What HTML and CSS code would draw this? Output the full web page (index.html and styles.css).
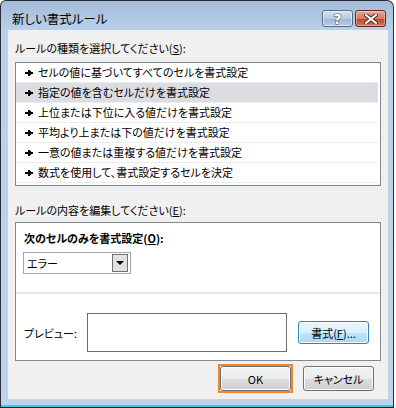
FILE: index.html
```html
<!DOCTYPE html>
<html lang="ja">
<head>
    <meta charset="UTF-8">
    <title>新しい書式ルール</title>
    <link rel="stylesheet" href="styles.css">
</head>
<body>
<div class="window">
    <div class="titlebar">
        <span class="title">新しい書式ルール</span>
        <div class="caption-buttons">
            <button class="cap help"><span>?</span></button>
            <button class="cap close">
                <svg width="14" height="10" viewBox="0 0 14 10">
                    <path d="M2 1 L12 9 M12 1 L2 9" stroke="#4a2a26" stroke-width="4" stroke-linecap="square"/>
                    <path d="M2 1 L12 9 M12 1 L2 9" stroke="#fff" stroke-width="2" stroke-linecap="square"/>
                </svg>
            </button>
        </div>
    </div>

    <div class="client">
        <div class="label">ルールの種類を選択してください(<u>S</u>):</div>
        <ul class="rule-list">
            <li><i class="arrow"></i>セルの値に基づいてすべてのセルを書式設定</li>
            <li class="selected"><i class="arrow"></i>指定の値を含むセルだけを書式設定</li>
            <li><i class="arrow"></i>上位または下位に入る値だけを書式設定</li>
            <li><i class="arrow"></i>平均より上または下の値だけを書式設定</li>
            <li><i class="arrow"></i>一意の値または重複する値だけを書式設定</li>
            <li><i class="arrow"></i>数式を使用して、書式設定するセルを決定</li>
        </ul>

        <div class="label label-edit">ルールの内容を編集してください(<u>E</u>):</div>
        <div class="edit-box">
            <div class="edit-top">
                <div class="bold-label">次のセルのみを書式設定(<u>O</u>):</div>
                <div class="combo">
                    <span>エラー</span>
                    <span class="combo-btn"></span>
                </div>
            </div>
            <div class="edit-bottom">
                <span class="preview-label">プレビュー:</span>
                <div class="preview"></div>
                <button class="btn btn-format">書式(<u>F</u>)...</button>
            </div>
        </div>

        <div class="footer">
            <div class="ok-ring"><button class="btn">OK</button></div>
            <button class="btn">キャンセル</button>
        </div>
    </div>
</div>
</body>
</html>
```

FILE: styles.css
```css
body {
    margin: 0;
    background: #fff;
    font-family: "Noto Sans CJK JP", "Noto Sans", sans-serif;
    font-size: 11px;
    font-feature-settings: "palt";
    color: #000;
}

.window {
    width: 394px;
    height: 408px;
    box-sizing: border-box;
    padding: 0 5px 5px 7px;
    background: linear-gradient(#a4bcd8, #b9d1ea 30px, #bdd4ec);
    border: 1px solid #2a2f36;
    border-bottom-color: #1b1b1b;
    border-radius: 6px 7px 0 0;
    box-shadow: inset 0 -2px 0 #3cc8e6;
}

.titlebar {
    height: 29px;
    display: flex;
    align-items: flex-start;
}

.title {
    padding: 10px 0 0 4px;
    font-size: 12.5px;
    line-height: 16px;
    color: #000;
}

.caption-buttons {
    margin-left: auto;
    margin-top: 9px;
    margin-right: 2px;
    display: flex;
    gap: 2px;
}

.cap {
    width: 31px;
    height: 17px;
    padding: 0;
    border: 1px solid #5a6b80;
    border-radius: 3px;
    display: flex;
    align-items: center;
    justify-content: center;
}

.help {
    background: linear-gradient(#d5e2f0, #b6cbe2 50%, #9db6d2 51%, #b8cde4);
    box-shadow: inset 0 0 0 1px rgba(255, 255, 255, 0.5);
}

.help span {
    font-family: "DejaVu Sans", sans-serif;
    font-weight: bold;
    font-size: 14px;
    line-height: 14px;
    color: #fff;
    -webkit-text-stroke: 1px #3c4a5c;
    paint-order: stroke fill;
}

.close {
    border-color: #5b2a24;
    background: linear-gradient(#e9a99b, #d47763 50%, #c2442c 51%, #d4735c);
    box-shadow: inset 0 0 0 1px rgba(255, 255, 255, 0.35);
}

.client {
    height: 369px;
    box-sizing: border-box;
    background: #f0f0f0;
    padding: 10px 7px 0 7px;
}

.label {
    line-height: 16px;
    height: 16px;
}

.label-edit {
    margin-top: 16px;
}

.rule-list {
    list-style: none;
    margin: 6px 0 0 0;
    padding: 0 2px 2px 0;
    box-sizing: content-box;
    height: 120px;
    background: #fff;
    border: 1px solid #828790;
}

.rule-list li {
    height: 19px;
    line-height: 19px;
    border-bottom: 1px solid #ececec;
    padding-left: 9px;
    display: flex;
    align-items: center;
    white-space: nowrap;
}

.rule-list li.selected {
    background: #dcdce3;
}

.arrow {
    width: 9px;
    height: 7px;
    margin-right: 4px;
    background:
        linear-gradient(#000, #000) 0 3px / 5px 2px no-repeat,
        conic-gradient(from -120deg at 100% 50%, #000 60deg, transparent 0) 3px 0 / 6px 8px no-repeat;
}

.edit-box {
    margin-top: 4px;
    height: 139px;
    box-sizing: border-box;
    background: #fff;
    border: 1px solid #828790;
}

.edit-top {
    height: 71px;
    box-sizing: border-box;
    padding: 7px 0 0 7px;
    border-bottom: 2px solid #e6e6e6;
}

.bold-label {
    font-weight: bold;
    line-height: 16px;
    padding-left: 1px;
}

.combo {
    margin-top: 6px;
    width: 108px;
    height: 22px;
    box-sizing: border-box;
    border: 1px solid #a6a6a6;
    display: flex;
    align-items: center;
    padding: 0 2px 0 3px;
}

.combo-btn {
    margin-left: auto;
    width: 16px;
    height: 18px;
    box-sizing: border-box;
    border: 1px solid #707070;
    background: #e1e1e1;
    position: relative;
}

.combo-btn::after {
    content: "";
    position: absolute;
    left: 3px;
    top: 6px;
    border-left: 4px solid transparent;
    border-right: 4px solid transparent;
    border-top: 4px solid #000;
}

.edit-bottom {
    display: flex;
    align-items: center;
    padding: 19px 0 0 8px;
}

.preview-label {
    width: 63px;
}

.preview {
    width: 200px;
    height: 39px;
    box-sizing: border-box;
    border: 1px solid #6d6d6d;
}

.btn {
    font-family: inherit;
    font-size: 11px;
    font-feature-settings: "palt";
    color: #000;
    width: 71px;
    height: 25px;
    padding: 0;
    border: 1px solid #707070;
    border-radius: 3px;
    background: linear-gradient(#f2f2f2, #ebebeb 50%, #dddddd 51%, #cfcfcf);
    box-shadow: inset 0 0 0 1px #fcfcfc;
}

.btn-format {
    margin-left: 11px;
    height: 23px;
    border-color: #3c7fb1;
    background: linear-gradient(#eaf6fd, #d9f0fc 50%, #bee6fd 51%, #a7d9f5);
}

.footer {
    display: flex;
    justify-content: flex-end;
    align-items: center;
    gap: 10px;
    margin-top: 3px;
    padding-right: 7px;
}

.ok-ring {
    border: 2px solid #f0852a;
    line-height: 0;
}
```
